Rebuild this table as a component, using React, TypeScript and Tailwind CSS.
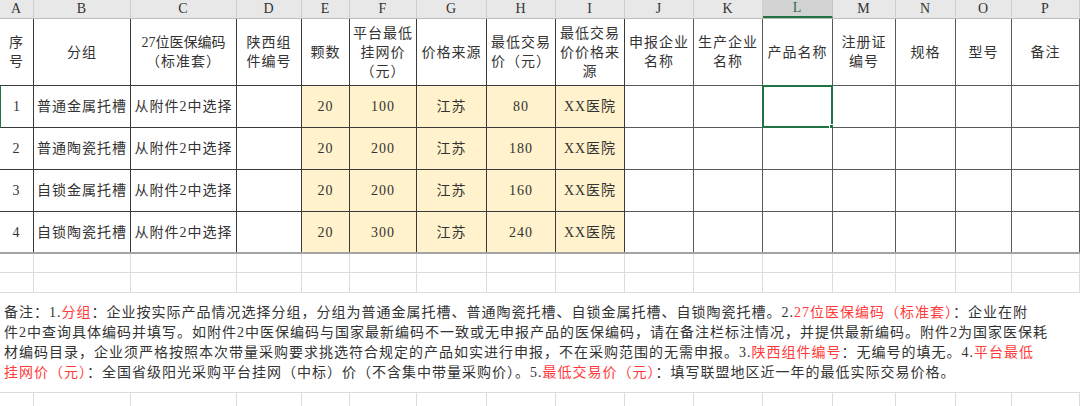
import React from "react";

const GRID =
  "grid grid-cols-[34px_97px_106px_65px_48px_67px_70px_69px_69px_69px_69px_70px_63px_60px_56px_68px]";
const LETTERS = "ABCDEFGHIJKLMNOP".split("");

const HEAD: string[][] = [
  ["序", "号"],
  ["分组"],
  ["27位医保编码", "（标准套）"],
  ["陕西组", "件编号"],
  ["颗数"],
  ["平台最低", "挂网价", "（元）"],
  ["价格来源"],
  ["最低交易", "价（元）"],
  ["最低交易", "价价格来", "源"],
  ["申报企业", "名称"],
  ["生产企业", "名称"],
  ["产品名称"],
  ["注册证", "编号"],
  ["规格"],
  ["型号"],
  ["备注"],
];

const ROWS: [number, string, number, number][] = [
  [1, "普通金属托槽", 100, 80],
  [2, "普通陶瓷托槽", 200, 180],
  [3, "自锁金属托槽", 200, 160],
  [4, "自锁陶瓷托槽", 300, 240],
];

type Seg = [string, boolean];
const NOTE: Seg[][] = [
  [
    ["备注：1.", false],
    ["分组", true],
    ["：企业按实际产品情况选择分组，分组为普通金属托槽、普通陶瓷托槽、自锁金属托槽、自锁陶瓷托槽。2.", false],
    ["27位医保编码（标准套）", true],
    ["：企业在附", false],
  ],
  [
    ["件2中查询具体编码并填写。如附件2中医保编码与国家最新编码不一致或无申报产品的医保编码，请在备注栏标注情况，并提供最新编码。附件2为国家医保耗", false],
  ],
  [
    ["材编码目录，企业须严格按照本次带量采购要求挑选符合规定的产品如实进行申报，不在采购范围的无需申报。3.", false],
    ["陕西组件编号", true],
    ["：无编号的填无。4.", false],
    ["平台最低", true],
  ],
  [
    ["挂网价（元）", true],
    ["：全国省级阳光采购平台挂网（中标）价（不含集中带量采购价）。5.", false],
    ["最低交易价（元）", true],
    ["：填写联盟地区近一年的最低实际交易价格。", false],
  ],
];

function borderFor(i: number) {
  return i < 9 ? "border-[#3a3a3a]" : "border-[#5a5a5a]";
}

function BlankRow({ h }: { h: string }) {
  return (
    <div className={GRID}>
      {LETTERS.map((l) => (
        <div key={l} className={`${h} border-r border-b border-[#dcdcdc]`} />
      ))}
    </div>
  );
}

export default function App() {
  return (
    <div className="w-[1080px] h-[406px] overflow-hidden bg-white text-[#333] text-[14px] tracking-[1px] font-['Liberation_Serif','Noto_Sans_CJK_SC',serif]">
      {/* column letters */}
      <div className={`${GRID} h-[19px] bg-[#e8e8e8] border-b border-[#bdbdbd]`}>
        {LETTERS.map((l) => (
          <div
            key={l}
            className={
              l === "L"
                ? "flex items-center justify-center bg-[#d3d3d3] border-r border-[#c4c4c4] border-b-2 border-b-[#217346] text-[#2d6e4e] text-[14px] leading-none"
                : "flex items-center justify-center border-r border-[#cfcfcf] text-[14px] leading-none"
            }
          >
            {l}
          </div>
        ))}
      </div>

      {/* header row */}
      <div className={`${GRID} h-[67px]`}>
        {HEAD.map((lines, i) => (
          <div
            key={i}
            className={`flex flex-col items-center justify-center border-r border-b ${borderFor(i)} leading-[19px] whitespace-nowrap`}
          >
            {lines.map((t, j) => (
              <span key={j} className={i === 2 && j === 0 ? "tracking-[0px]" : ""}>
                {t}
              </span>
            ))}
          </div>
        ))}
      </div>

      {/* data rows */}
      {ROWS.map(([n, g, p, low], ri) => {
        const h = ri === 3 ? "h-[40px]" : "h-[42px]";
        const bb = ri === 3 ? "" : "border-b";
        const cells: (string | number)[] = [n, g, "从附件2中选择", "", 20, p, "江苏", low, "XX医院", "", "", "", "", "", "", ""];
        return (
          <div key={ri} className={GRID}>
            {cells.map((c, i) => (
              <div
                key={i}
                className={`relative ${h} flex items-center justify-center whitespace-nowrap border-r ${bb} ${borderFor(i)} ${
                  i >= 4 && i <= 8 ? "bg-[#fff2cc]" : "bg-white"
                } ${ri === 0 && i === 0 ? "border-l border-l-[#217346]" : ""}`}
              >
                {c}
                {ri === 0 && i === 11 && (
                  <div className="absolute -left-px -top-px -right-px -bottom-px border-2 border-[#217346]">
                    <div className="absolute -right-[4px] -bottom-[4px] w-[6px] h-[6px] bg-[#217346] border border-white" />
                  </div>
                )}
              </div>
            ))}
          </div>
        );
      })}
      <div className="h-[2px] bg-[#a3a3a3]" />

      <BlankRow h="h-[19px]" />
      <BlankRow h="h-[20px]" />

      {/* note row */}
      <div className="h-[100px] border-b border-[#dcdcdc] flex flex-col justify-center pl-[4px] leading-[20px] tracking-[1px]">
        {NOTE.map((line, li) => (
          <div key={li} className="whitespace-nowrap">
            {line.map(([t, red], si) => (
              <span key={si} className={red ? "text-[#ff3b3b]" : ""}>
                {t}
              </span>
            ))}
          </div>
        ))}
      </div>

      <BlankRow h="h-[20px]" />
    </div>
  );
}
